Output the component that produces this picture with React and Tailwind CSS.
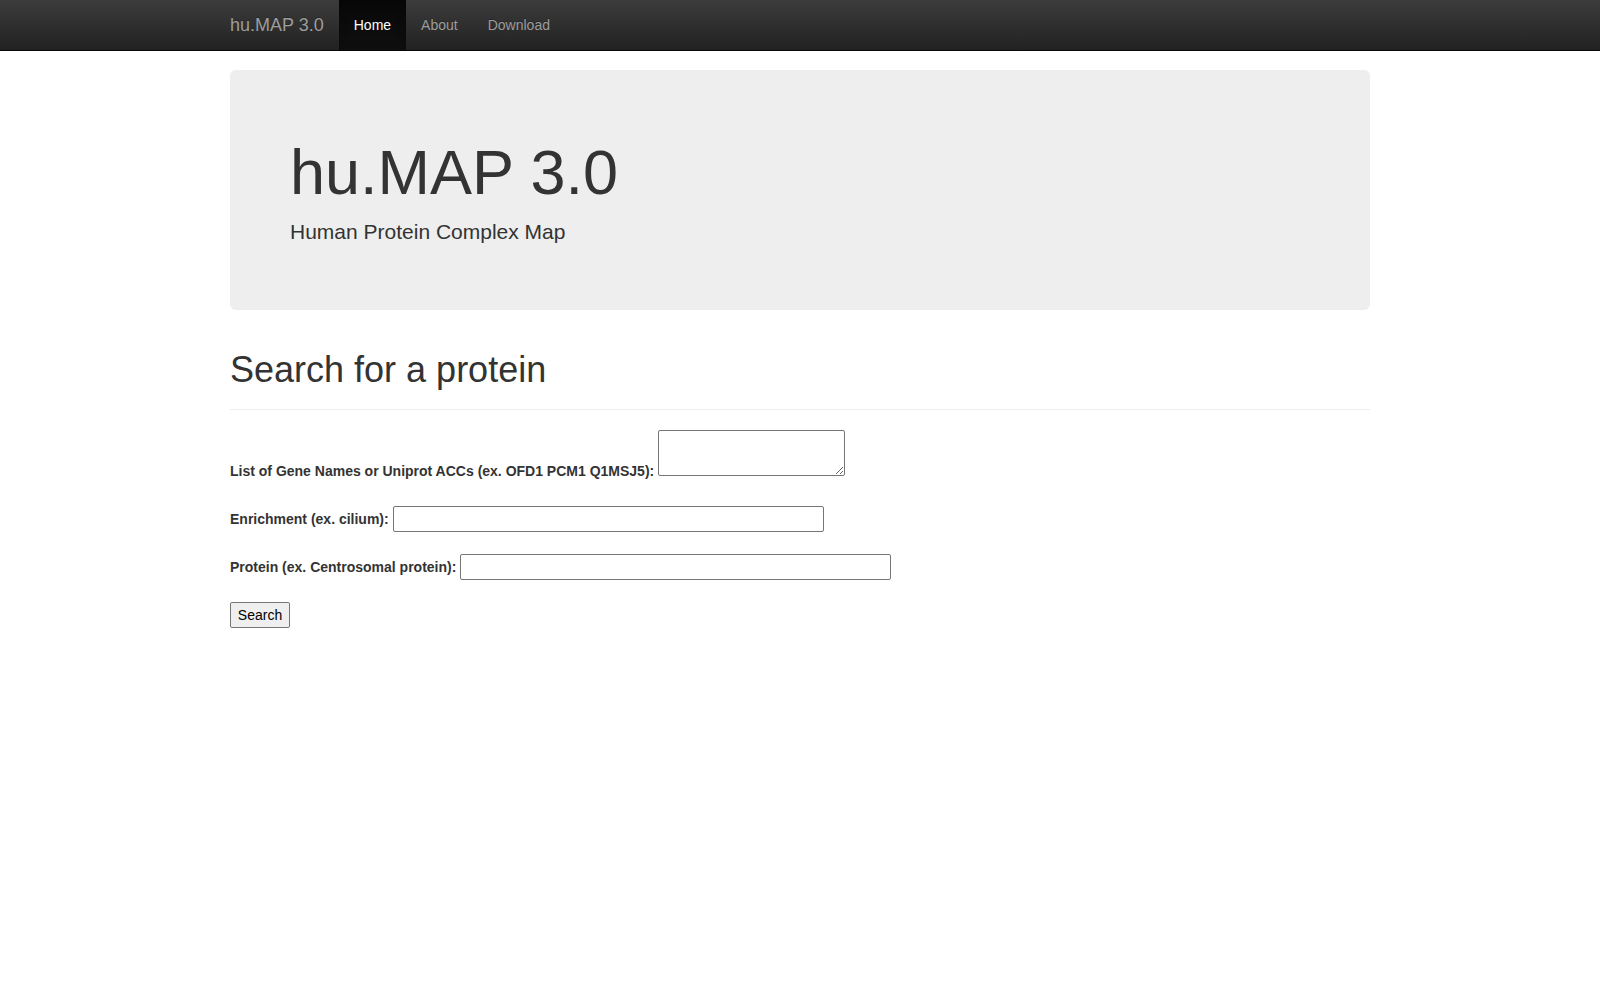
export default function App() {
  return (
    <div className="min-h-screen bg-white text-[14px] leading-[20px] text-[#333]" style={{ fontFamily: '"Liberation Sans", Arial, Helvetica, sans-serif' }}>
      {/* navbar */}
      <nav className="h-[51px] border-b border-[#080808] bg-gradient-to-b from-[#3c3c3c] to-[#222]">
        <div className="mx-auto flex w-[1170px] px-[15px]">
          <a className="-ml-[15px] block h-[50px] px-[15px] py-[15px] text-[18px] leading-[20px] text-[#9d9d9d] [text-shadow:0_-1px_0_rgba(0,0,0,0.25)]">hu.MAP 3.0</a>
          <ul className="flex">
            <li>
              <a className="block h-[50px] bg-gradient-to-b from-[#080808] to-[#0f0f0f] px-[15px] py-[15px] text-white shadow-[inset_0_3px_9px_rgba(0,0,0,0.25)] [text-shadow:0_-1px_0_rgba(0,0,0,0.25)]">Home</a>
            </li>
            <li>
              <a className="block h-[50px] px-[15px] py-[15px] text-[#9d9d9d] [text-shadow:0_-1px_0_rgba(0,0,0,0.25)]">About</a>
            </li>
            <li>
              <a className="block h-[50px] px-[15px] py-[15px] text-[#9d9d9d] [text-shadow:0_-1px_0_rgba(0,0,0,0.25)]">Download</a>
            </li>
          </ul>
        </div>
      </nav>

      <div className="mx-auto w-[1170px] px-[15px]">
        {/* jumbotron */}
        <div className="mt-[19px] rounded-[6px] bg-[#eee] px-[60px] py-[48px]">
          <h1 className="mt-[20px] mb-[10px] text-[63px] leading-[1.1] font-medium">hu.MAP 3.0</h1>
          <p className="mb-[15px] text-[21px] leading-[30px] font-light">Human Protein Complex Map</p>
        </div>

        {/* page header */}
        <div className="mt-[40px] mb-[20px] border-b border-[#eee] pb-[9px]">
          <h1 className="mb-[10px] text-[36px] leading-[1.1] font-medium">Search for a protein</h1>
        </div>

        <form>
          <div className="flex items-end gap-[4px]">
            <label className="font-bold leading-[20px]">List of Gene Names or Uniprot ACCs (ex. OFD1 PCM1 Q1MSJ5):</label>
            <textarea className="mb-[5px] h-[46px] w-[187px] rounded-[2px] border border-[#767676] bg-white px-[2px] text-[13px]"></textarea>
          </div>
          <div className="mt-[25px] flex items-center gap-[4px]">
            <label className="font-bold leading-[20px]">Enrichment (ex. cilium):</label>
            <input type="text" className="h-[26px] w-[431px] rounded-[2px] border border-[#767676] bg-white px-[2px]" />
          </div>
          <div className="mt-[22px] flex items-center gap-[4px]">
            <label className="font-bold leading-[20px]">Protein (ex. Centrosomal protein):</label>
            <input type="text" className="h-[26px] w-[431px] rounded-[2px] border border-[#767676] bg-white px-[2px]" />
          </div>
          <div className="mt-[22px]">
            <button type="button" className="h-[26px] w-[60px] rounded-[2px] border border-[#767676] bg-[#efefef] text-[14px] text-black">Search</button>
          </div>
        </form>
      </div>
    </div>
  );
}
